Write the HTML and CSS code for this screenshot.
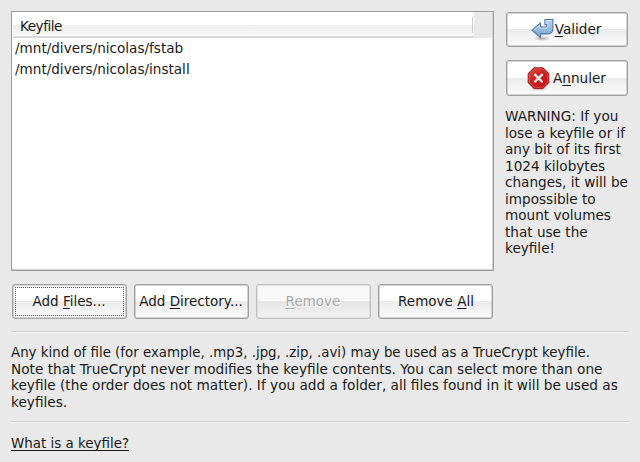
FILE: index.html
```html
<!DOCTYPE html>
<html lang="en">
<head>
<meta charset="utf-8">
<title>Keyfiles</title>
<link rel="stylesheet" href="styles.css">
</head>
<body>
<main class="dialog">
  <div class="top">
    <section class="files">
      <div class="list">
        <div class="list-head"><span class="column">Keyfile</span><span class="corner"></span></div>
        <div class="row">/mnt/divers/nicolas/fstab</div>
        <div class="row">/mnt/divers/nicolas/install</div>
      </div>
      <div class="actions">
        <button class="btn focused"><span>Add <u>F</u>iles...</span></button>
        <button class="btn"><span>Add <u>D</u>irectory...</span></button>
        <button class="btn" disabled><span><u>R</u>emove</span></button>
        <button class="btn"><span>Remove <u>A</u>ll</span></button>
      </div>
    </section>
    <aside class="side">
      <button class="btn">
        <svg class="icon" width="23" height="24" viewBox="0 0 23 24">
          <defs>
            <linearGradient id="blue" x1="0" y1="0" x2="0" y2="1"><stop offset="0" stop-color="#b9cfe7"/><stop offset="1" stop-color="#79a5d2"/></linearGradient>
            <radialGradient id="shade"><stop offset="0" stop-color="#000" stop-opacity=".3"/><stop offset="1" stop-color="#000" stop-opacity="0"/></radialGradient>
          </defs>
          <ellipse cx="11" cy="20.5" rx="9" ry="2.5" fill="url(#shade)"/>
          <path d="M1 12.200 9.500 4.800V9h4.300c1.700 0 2.100-.7 2.100-1.800V6.500h-2V1.500h8v9c0 3.600-2 5.400-5.500 5.400H9.500v3.800z" fill="url(#blue)" stroke="#4f78a8" stroke-width="1.100" stroke-linejoin="round"/>
          <path d="M2.900 12.200 8.500 7.300v2.800h5.700c2 0 2.800-1 2.800-2.800V5.400h-2V2.600h5.800" fill="none" stroke="#dce9f6" stroke-width=".8"/>
        </svg><span><u>V</u>alider</span>
      </button>
      <button class="btn cancel">
        <svg class="icon" width="23" height="24" viewBox="0 0 23 24">
          <defs><linearGradient id="red" x1="0" y1="0" x2="1" y2="1"><stop offset="0" stop-color="#dd4646"/><stop offset=".5" stop-color="#cc2020"/><stop offset="1" stop-color="#c01010"/></linearGradient></defs>
          <ellipse cx="11.500" cy="21.800" rx="10" ry="2.200" fill="url(#shade)"/>
          <path d="M7.200.8h8.600l6 6v8.700l-6 6H7.200l-6-6V6.800z" fill="url(#red)" stroke="#a82020" stroke-width="1.100"/>
          <path d="M7.600 1.900h7.800l5.300 5.300v7.900l-5.300 5.300H7.600l-5.300-5.300V7.200z" fill="none" stroke="#e06868" stroke-width=".6"/>
          <path d="m7.400 7.100 8.200 8.200m0-8.200-8.200 8.200" stroke="#f1f1f1" stroke-width="2.300"/>
        </svg><span>A<u>n</u>nuler</span>
      </button>
      <p class="warning">WARNING: If you<br>lose a keyfile or if<br>any bit of its first<br>1024 kilobytes<br>changes, it will be<br>impossible to<br>mount volumes<br>that use the<br>keyfile!</p>
    </aside>
  </div>
  <hr>
  <p class="info"><span class="tight">Any kind of file (for example, .mp3, .jpg, .zip, .avi) may be used as a TrueCrypt keyfile.</span><span>Note that TrueCrypt never modifies the keyfile contents. You can select more than one</span><span>keyfile (the order does not matter). If you add a folder, all files found in it will be used as</span><span>keyfiles.</span></p>
  <hr>
  <a class="link">What is a keyfile?</a>
</main>
</body>
</html>
```
FILE: styles.css
```css
* { box-sizing: border-box; }
body {
  margin: 0;
  background: #e9e9e9;
  color: #1a1a1a;
  font: 13.6px/16.5px "DejaVu Sans", sans-serif;
}
.dialog { height: 462px; padding: 11px 11px 0; overflow: hidden; white-space: nowrap; }
.top { display: flex; justify-content: space-between; height: 320px; }
.files { width: 483px; }
.list {
  height: 260px;
  border: 1px solid #9c9c9c;
  box-shadow: inset -1px -1px #d0d0d0;
  background: #fff;
}
.list-head { display: flex; height: 26px; margin: 0 1px 1px; background: #e9e9e9; }
.column {
  flex: 1;
  padding: 6px 7px 0;
  border-bottom: 2px solid #d9d9d9;
  background: linear-gradient(#fff 0 54%, #ededed 54%, #fafafa);
  letter-spacing: -.5px;
}
.corner { position: relative; width: 18px; }
.corner::before {
  content: "";
  position: absolute;
  left: -2px;
  top: 5px;
  width: 1px;
  height: 16px;
  background: #cbcbcb;
}
.row { height: 21px; padding: 1px 3px 0; font-size: 13.57px; }
.actions { display: grid; grid-template-columns: repeat(4, 115px); gap: 7px; margin: 13px 1px 0; }
.btn {
  display: flex;
  align-items: center;
  justify-content: center;
  height: 35px;
  padding: 0 0 1px;
  border: 1px solid #a0a0a0;
  border-radius: 3px;
  background: linear-gradient(#fff 0 50%, #ebebeb 50%, #fbfbfb);
  box-shadow: inset 0 0 0 .5px #aaa;
  color: inherit;
  font: inherit;
}
.actions .btn { padding-right: 1px; font-size: 13.5px; }
.actions .btn:last-child { padding: 0 0 1px 1px; }
.btn u { text-underline-offset: 2px; text-decoration-skip-ink: none; }
.btn:disabled {
  border-color: #bfbfbf;
  background: linear-gradient(#f8f8f8 0 50%, #e5e5e5 50%, #f2f2f2);
  box-shadow: inset 0 0 0 .5px #ccc;
  color: #a8a8a8;
  text-shadow: 1px 1px #fff;
}
.focused { position: relative; }
.focused::after { content: ""; position: absolute; inset: 2px; border: 1px dotted #555; }
.side { width: 124px; padding-top: 1px; }
.side .btn { width: 122px; margin: 0 0 13px 1px; padding-right: 2px; }
.side .cancel { height: 36px; margin-bottom: 12px; padding: 0 1px 0 0; }
.icon { flex: none; margin: 1px 1px 0 0; }
.cancel .icon { margin: 2px 3px 0 0; }
.warning { margin: 0; }
hr { height: 2px; margin: 0; border: 0; border-top: 1px solid #cecece; background: #f7f7f7; }
.info { height: 88px; margin: 0; padding-top: 11px; font-size: 13.67px; }
.info span { display: block; }
.info .tight { margin: 1px 0 -1px; font-size: 13.37px; }
.link { display: block; width: max-content; margin-top: 13px; font-size: 13.43px; text-decoration: underline; text-decoration-skip-ink: none; text-underline-offset: 2px; }
```
